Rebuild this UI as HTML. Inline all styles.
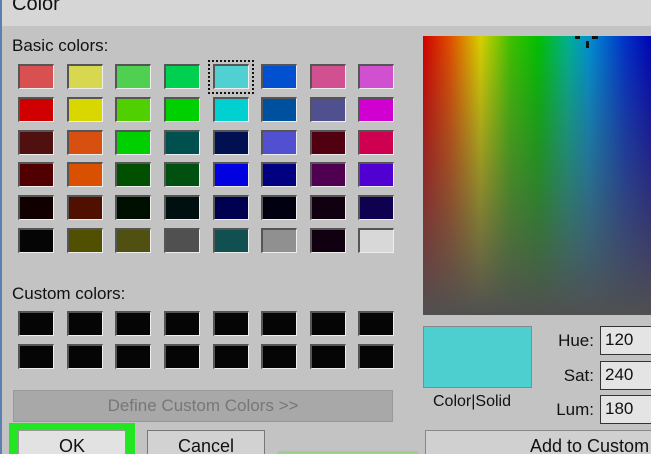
<!DOCTYPE html>
<html style="width:651px;height:454px;overflow:hidden"><head><style>
*{margin:0;padding:0;box-sizing:border-box}
body{width:651px;height:454px;overflow:hidden;background:#c3c3c3;font-family:"Liberation Sans",sans-serif;position:relative}
.a{position:absolute}
.sw{position:absolute;width:36px;height:25px;border-top:2px solid #555;border-left:2px solid #555;border-right:1px solid #eee;border-bottom:1px solid #eee}
.t{font-size:16px;color:#111}
.box{position:absolute;left:600px;width:60px;height:29px;background:#e4e4e4;border:1px solid #333;font-size:17px;padding:3px 0 0 4px;color:#111}
.lbl{position:absolute;font-size:17px;color:#111;text-align:right;width:50px;left:544px}
</style></head><body>
<div class="a" style="left:0;top:0;width:651px;height:26px;background:#d6d6d6"></div>
<div class="a" style="left:0;top:0;width:2px;height:454px;background:#5a7fb0"></div>
<div class="a t" style="left:12px;top:-7px;font-size:20px">Color</div>
<div class="a t" style="left:12px;top:36px;font-size:17px">Basic colors:</div>
<div id="g"></div>
<div class="a t" style="left:12px;top:284px;font-size:17px">Custom colors:</div>
<div class="a" style="left:423px;top:36px;width:230px;height:279px;background:linear-gradient(to bottom,rgba(128,128,128,0),rgba(80,80,80,1)),linear-gradient(to right,#d00000 0%,#e05000 12%,#d8d000 25%,#40c000 38%,#00c000 50%,#00b090 63%,#0090d0 72%,#0030c8 88%,#0000b0 100%)"></div>
<div class="a" style="left:575px;top:36px;width:5px;height:3px;background:#111"></div>
<div class="a" style="left:592px;top:36px;width:6px;height:3px;background:#111"></div>
<div class="a" style="left:586px;top:41px;width:3px;height:7px;background:#111"></div>
<div class="a" style="left:423px;top:326px;width:109px;height:62px;background:#4ecfcf;border:1px solid #888"></div>
<div class="a t" style="left:433px;top:393px;font-size:16px">Color|Solid</div>
<div class="lbl" style="top:331px">Hue:</div>
<div class="lbl" style="top:366px">Sat:</div>
<div class="lbl" style="top:400px">Lum:</div>
<div class="box" style="top:326px">120</div>
<div class="box" style="top:361px">240</div>
<div class="box" style="top:395px">180</div>
<div class="a" style="left:13px;top:390px;width:380px;height:32px;background:#a8a8a8;border:1px solid #999;color:#777;font-size:17px;text-align:center;line-height:30px">Define Custom Colors &gt;&gt;</div>
<div class="a" style="left:9px;top:423px;width:126px;height:31px;background:#22e622"></div>
<div class="a" style="left:18px;top:430px;width:108px;height:24px;background:#e2e2e2;border:1px solid #999;border-bottom:none;font-size:18px;text-align:center;line-height:30px;color:#111">OK</div>
<div class="a" style="left:147px;top:430px;width:118px;height:24px;background:#d2d2d2;border:1px solid #777;border-bottom:none;font-size:18px;text-align:center;line-height:30px;color:#111">Cancel</div>
<div class="a" style="left:425px;top:430px;width:226px;height:24px;background:#d0d0d0;border:1px solid #888;border-bottom:none;border-right:none;font-size:18px;line-height:30px;color:#111;padding-left:104px;white-space:nowrap;overflow:hidden">Add to Custom</div>
<div class="a" style="left:278px;top:451px;width:140px;height:3px;background:#9fcf8f"></div>
<script>
var c=[["#d85050","#d8d850","#50d050","#00d050","#50d0d0","#0050d0","#d05090","#d050d0"],
["#d00000","#d8d800","#50d000","#00d000","#00d0d0","#0050a0","#505090","#d000d0"],
["#501010","#d85010","#00d000","#005050","#001050","#5050d0","#500010","#d00050"],
["#500000","#d85000","#005000","#005010","#0000e0","#000080","#500050","#5000d0"],
["#100000","#501000","#001000","#001010","#000050","#000010","#100010","#100050"],
["#050505","#505000","#505010","#505050","#105050","#909090","#100010","#d8d8d8"]];
var xs=[18,67,115,164,213,261,310,358],h="";
for(var r=0;r<6;r++)for(var i=0;i<8;i++)h+='<div class="sw" style="left:'+xs[i]+'px;top:'+(64+r*32.8)+'px;background:'+c[r][i]+'"></div>';
for(var r=0;r<2;r++)for(var i=0;i<8;i++)h+='<div class="sw" style="left:'+xs[i]+'px;top:'+(311+r*33)+'px;background:#050505"></div>';
h+='<div class="a" style="left:208px;top:60px;width:46px;height:34px;border:2px dotted #111"></div>';
document.getElementById("g").innerHTML=h;
</script>
</body></html>
